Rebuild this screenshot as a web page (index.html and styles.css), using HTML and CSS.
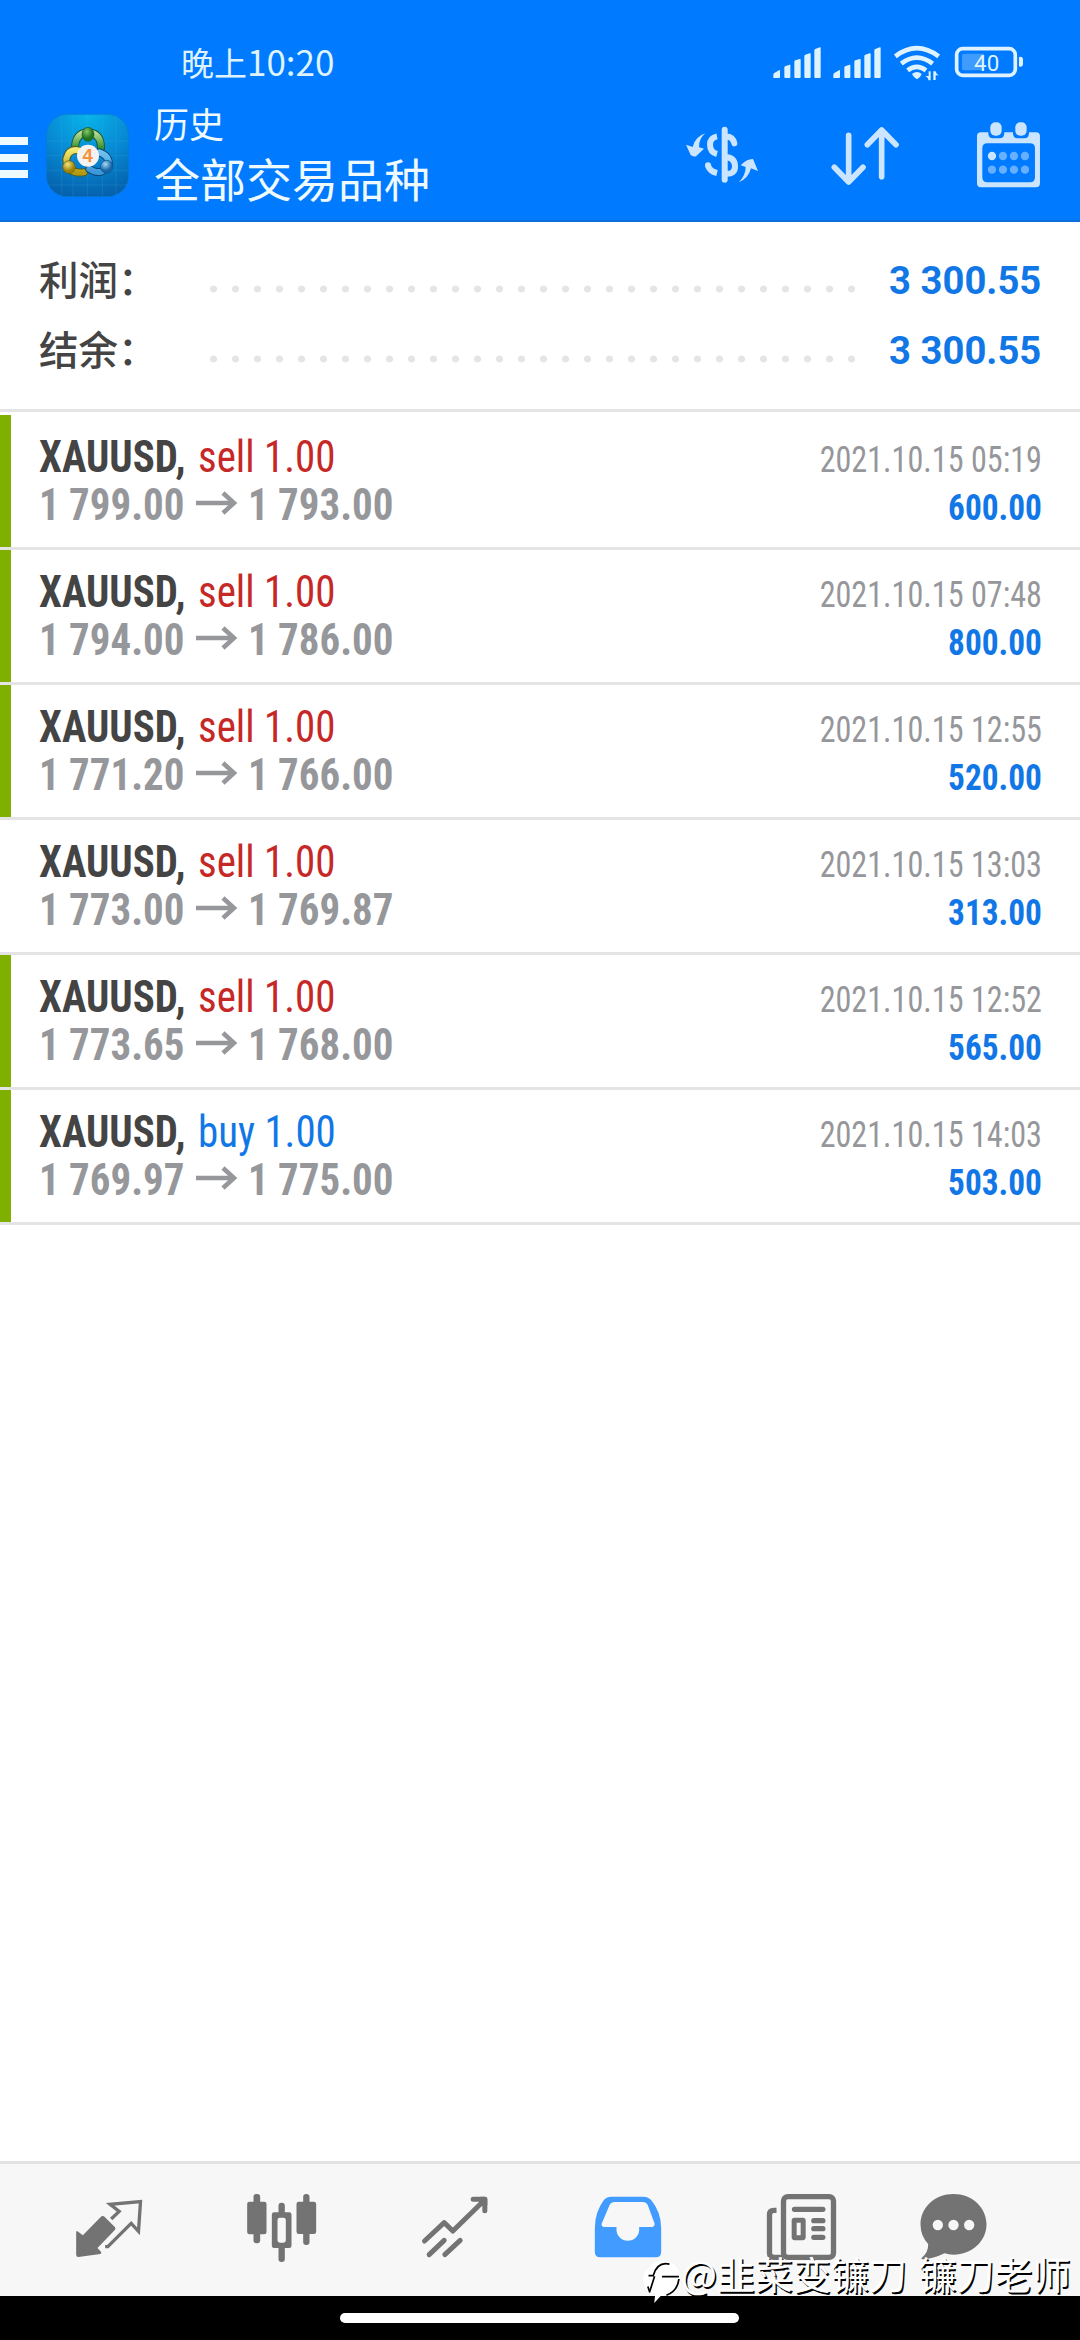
FILE: index.html
```
<!DOCTYPE html>
<html lang="zh-CN">
<head>
<meta charset="utf-8">
<title>历史</title>
<link rel="stylesheet" href="styles.css">
</head>
<body>
<div class="screen">
  <header class="header">
    <div class="status">
      <span class="clock">晚上<span class="digits">10:20</span></span>
      <svg class="status-icons" viewBox="330 60 770 140" fill="#dff3ff">
        <g id="signal">
          <path d="M340 174v-10q0-3 3-5l14-8q3-2 3 2v18q0 3-3 3zM373 142q0-2 2-3l14-5q2-1 2 2v35q0 3-3 3h-12q-3 0-3-3zM403 125q0-3 3-4l13-4q3-1 3 2v52q0 3-3 3h-13q-3 0-3-3zM433 108q0-3 3-4l13-4q3-1 3 2v69q0 3-3 3h-13q-3 0-3-3zM463 91q0-3 3-4l13-5q3-1 3 2v87q0 3-3 3h-13q-3 0-3-3z"/>
        </g>
        <use href="#signal" x="180"/>
        <g fill="none" stroke="#dff3ff" stroke-width="14">
          <path d="M706 109Q770 60 836 109M724 131Q770 95 818 131M743 151Q770 130 798 151"/>
        </g>
        <path d="M756 162q15-12 29 0q-2 8-14 16q-12-8-15-16zM806 154h6v27h-6q-1-9-10-13h10zM820 154h7q1 8 10 12h-10v14h-7z"/>
        <rect x="890" y="86" width="176" height="80" rx="18" fill="none" stroke="#dff3ff" stroke-width="11"/>
        <path d="M912 101h60v50h-60q-6 0-6-6v-38q0-6 6-6z" fill="#409bff"/>
        <path d="M1077 113q0-3 4-3q8 0 8 8v14q0 8-8 8q-4 0-4-3z"/>
        <text x="980" y="152" text-anchor="middle" class="battery">40</text>
      </svg>
    </div>
    <div class="toolbar">
      <svg class="menu" viewBox="0 0 28 42" fill="#effaff"><path d="M0 0h28v8H0zM0 17h28v8H0zM0 33h28v8H0z"/></svg>
      <svg class="logo" viewBox="20 13 249 249">
        <defs>
          <radialGradient id="sky" cx=".5" cy="0" r="1"><stop offset="0" stop-color="#08b4ea"/><stop offset=".55" stop-color="#0788d2"/><stop offset="1" stop-color="#0562ad"/></radialGradient>
          <linearGradient id="green" x2="0" y2="1"><stop stop-color="#bfe09a"/><stop offset="1" stop-color="#2e8a25"/></linearGradient>
          <linearGradient id="gold" x2="0" y2="1"><stop stop-color="#f3ea72"/><stop offset="1" stop-color="#b39a12"/></linearGradient>
          <linearGradient id="blue" x2="0" y2="1"><stop stop-color="#6fc0ef"/><stop offset="1" stop-color="#3c97d8"/></linearGradient>
          <radialGradient id="bg1" cx=".4" cy=".3"><stop stop-color="#86c968"/><stop offset="1" stop-color="#1f7420"/></radialGradient>
          <radialGradient id="by1" cx=".4" cy=".3"><stop stop-color="#f0e682"/><stop offset="1" stop-color="#a08408"/></radialGradient>
          <radialGradient id="bb1" cx=".4" cy=".3"><stop stop-color="#a5daf8"/><stop offset="1" stop-color="#1766a8"/></radialGradient>
        </defs>
        <rect x="21" y="14" width="247" height="247" rx="62" fill="url(#sky)" stroke="#0878d4" stroke-width="2"/>
        <path d="M67 16v243M101 14v247M145 14v247M189 14v247M230 16v243M21 94h247M21 138h247M21 182h247M23 226h243" stroke="#5cc4f0" stroke-opacity=".22" stroke-width="2"/>
        <g fill="none" stroke-linecap="round">
          <path d="M107 118Q106 72 146 67Q186 72 185 116" stroke="#155d3b" stroke-width="24"/>
          <path d="M107 118Q106 72 146 67Q186 72 185 116" stroke="url(#green)" stroke-width="18"/>
          <path d="M118 122Q88 116 81 148Q82 194 134 188" stroke="#4c5d26" stroke-width="24"/>
          <path d="M118 122Q88 116 81 148Q82 194 134 188" stroke="url(#gold)" stroke-width="18"/>
          <path d="M180 128Q210 138 208 164Q190 202 150 178" stroke="#084b7c" stroke-width="24"/>
          <path d="M180 128Q210 138 208 164Q190 202 150 178" stroke="url(#blue)" stroke-width="18"/>
        </g>
        <ellipse cx="146" cy="74" rx="18" ry="21" fill="url(#bg1)" stroke="#185b2a" stroke-width="2"/>
        <circle cx="89" cy="172" r="19" fill="url(#by1)" stroke="#5b5918" stroke-width="2"/>
        <circle cx="202" cy="171" r="19" fill="url(#bb1)" stroke="#0c548a" stroke-width="2"/>
        <circle cx="146" cy="138" r="33" fill="#f4f3f1"/>
        <text x="145" y="157" text-anchor="middle" class="logo-num">4</text>
      </svg>
      <div class="titles"><div class="title">历史</div><div class="subtitle">全部交易品种</div></div>
      <svg class="actions" viewBox="60 290 1100 230" fill="#cce5ff">
        <g fill="none" stroke="#cce5ff" stroke-width="18">
          <path d="M194 328V478M194 349q24-2 29 20M194 410q30 0 31 27t-31 23" stroke-linecap="round"/>
          <path d="M171 348q-21 4-21 25q0 22 21 28M171 458q-21-5-27-22"/>
        </g>
        <circle cx="144" cy="435" r="9"/>
        <path d="M136 339q-20 16-19 42l15 4l-24 23q-6 2-16-4l-14-31l20 7q7-31 38-41zM236 486q21-20 21-46l-15-5q19-20 37-19l15 36l-21-8q-8 31-37 42z"/>
        <g fill="none" stroke="#cce5ff" stroke-width="17" stroke-linecap="round" stroke-linejoin="round">
          <path d="M566 345V484M523 441l43 44 43-44M665 469V329M622 373l43-44 43 44"/>
        </g>
        <path fill-rule="evenodd" d="M963 336h22q-1 18 14 18h20q15 0 14-18h26q-1 18 14 18h20q15 0 14-18h21q12 0 12 12v141q0 12-12 12H963q-12 0-12-12V348q0-12 12-12zM982 369q-15 0-15 15v87q0 15 15 15h128q15 0 15-15v-87q0-15-15-15z"/>
        <rect x="991" y="306" width="34" height="40" rx="15"/><rect x="1066" y="306" width="34" height="40" rx="15"/>
        <circle cx="996" cy="407" r="12.5"/>
        <g fill="#66b0ff"><circle cx="1029" cy="407" r="12.5"/><circle cx="1062" cy="407" r="12.5"/><circle cx="1095" cy="407" r="12.5"/><circle cx="996" cy="448" r="12.5"/><circle cx="1029" cy="448" r="12.5"/><circle cx="1062" cy="448" r="12.5"/><circle cx="1095" cy="448" r="12.5"/></g>
      </svg>
    </div>
  </header>

  <section class="summary">
    <div class="sum-row"><span class="label">利润：</span><span class="dots"></span><span class="total">3 300.55</span></div>
    <div class="sum-row"><span class="label">结余：</span><span class="dots"></span><span class="total">3 300.55</span></div>
  </section>

  <main class="deals">
    <div class="deal closed"><div class="left"><div class="line"><b class="symbol">XAUUSD,</b><span class="sell">sell 1.00</span></div><div class="prices"><span>1 799.00</span><svg class="arrow" viewBox="0 0 42 24"><path d="M0 12H38M27 2L38 12L27 22"/></svg><span>1 793.00</span></div></div><div class="right"><div class="date">2021.10.15 05:19</div><div class="profit">600.00</div></div></div>
    <div class="deal closed"><div class="left"><div class="line"><b class="symbol">XAUUSD,</b><span class="sell">sell 1.00</span></div><div class="prices"><span>1 794.00</span><svg class="arrow" viewBox="0 0 42 24"><path d="M0 12H38M27 2L38 12L27 22"/></svg><span>1 786.00</span></div></div><div class="right"><div class="date">2021.10.15 07:48</div><div class="profit">800.00</div></div></div>
    <div class="deal closed"><div class="left"><div class="line"><b class="symbol">XAUUSD,</b><span class="sell">sell 1.00</span></div><div class="prices"><span>1 771.20</span><svg class="arrow" viewBox="0 0 42 24"><path d="M0 12H38M27 2L38 12L27 22"/></svg><span>1 766.00</span></div></div><div class="right"><div class="date">2021.10.15 12:55</div><div class="profit">520.00</div></div></div>
    <div class="deal"><div class="left"><div class="line"><b class="symbol">XAUUSD,</b><span class="sell">sell 1.00</span></div><div class="prices"><span>1 773.00</span><svg class="arrow" viewBox="0 0 42 24"><path d="M0 12H38M27 2L38 12L27 22"/></svg><span>1 769.87</span></div></div><div class="right"><div class="date">2021.10.15 13:03</div><div class="profit">313.00</div></div></div>
    <div class="deal closed"><div class="left"><div class="line"><b class="symbol">XAUUSD,</b><span class="sell">sell 1.00</span></div><div class="prices"><span>1 773.65</span><svg class="arrow" viewBox="0 0 42 24"><path d="M0 12H38M27 2L38 12L27 22"/></svg><span>1 768.00</span></div></div><div class="right"><div class="date">2021.10.15 12:52</div><div class="profit">565.00</div></div></div>
    <div class="deal closed"><div class="left"><div class="line"><b class="symbol">XAUUSD,</b><span class="buy">buy 1.00</span></div><div class="prices"><span>1 769.97</span><svg class="arrow" viewBox="0 0 42 24"><path d="M0 12H38M27 2L38 12L27 22"/></svg><span>1 775.00</span></div></div><div class="right"><div class="date">2021.10.15 14:03</div><div class="profit">503.00</div></div></div>
  </main>

  <nav class="tabs">
    <div class="tab"><svg viewBox="205.5 111 240 240" fill="#737373"><path d="M303 199q5-3 9 1l31 31q4 5 0 9l-52 54l11 12q2 5-3 6l-65 9q-7 0-7-7v-66q0-8 6-3l14 11z"/><path d="M332 207l24-23-27-21 91-8-6 89-22-24-70 70h-8" fill="none" stroke="#737373" stroke-width="10"/></svg></div>
    <div class="tab"><svg viewBox="724.5 111 240 240" fill="#737373"><rect x="740" y="155" width="58" height="98" rx="7"/><rect x="759" y="132" width="20" height="148" rx="9"/><rect x="888" y="155" width="59" height="97" rx="7"/><rect x="908" y="132" width="19" height="153" rx="9"/><rect x="834" y="158" width="19" height="40" rx="9"/><rect x="834" y="284" width="19" height="52" rx="9"/><path fill-rule="evenodd" d="M821 187h45q7 0 7 7v93q0 7-7 7h-45q-7 0-7-7v-93q0-7 7-7zM838 203q-7 0-7 7v61q0 7 7 7h11q7 0 7-7v-61q0-7-7-7z"/></svg></div>
    <div class="tab"><svg viewBox="163.5 111 240 240" fill="none" stroke="#737373" stroke-width="15" stroke-linecap="round" stroke-linejoin="round"><path d="M192 273l59-55 26 25 93-91M338 148h35v34"/><path d="M361 148h12v15z"/><path d="M206 314l45-43M253 314l46-43" /></svg></div>
    <div class="tab"><svg viewBox="682.5 111 240 240"><path fill="#429cff" fill-rule="evenodd" d="M753 140h95q15 0 24 10q30 37 30 84v72q0 16-16 16H719q-16 0-16-16v-72q0-47 27-84q8-10 23-10zM763 156q-11 0-16 10l-23 54q-3 11 8 11h36v8a34 33 0 0 0 68 0v-8h37q11 0 9-11l-20-54q-5-10-16-10z"/></svg></div>
    <div class="tab"><svg viewBox="391.5 111 240 240"><g fill="none" stroke="#737373" stroke-width="16"><rect x="459" y="140" width="150" height="182" rx="13"/><path d="M438 181h-8q-13 0-13 13v115q0 13 13 13h29"/><rect x="491" y="211" width="27" height="52" rx="1" stroke-width="15"/><path d="M492 178h85M550 212h27M550 236h27M550 262h27" stroke-linecap="round"/></g></svg></div>
    <div class="tab last"><svg viewBox="847.5 111 240 240"><path fill="#737373" d="M969 132c55 0 99 40 99 91s-44 91-99 91q-15 0-27-4q-34 17-64 18q-8-1-4-5q20-16 19-41q-23-24-23-59c0-51 44-91 99-91z"/><g fill="#f7f7f7"><circle cx="922" cy="225" r="15.5"/><circle cx="969" cy="225" r="15.5"/><circle cx="1016" cy="225" r="15.5"/></g></svg></div>
  </nav>
  <div class="gesture"><div class="pill"></div></div>
  <div class="watermark">
    <svg viewBox="0 15 115 145"><path d="M20 56Q38 30 68 31Q113 39 114 78Q112 131 58 136L39 157L42 130Q5 120 6 82Q8 66 20 56z" fill="#fff"/><path d="M22 76h14Q48 34 84 42M26 122l14-44M62 79h50" fill="none" stroke="#000" stroke-width="5"/><path d="M112 86q-4 36-37 48M20 108l6 18" fill="none" stroke="#000" stroke-width="5"/></svg>
    <span>@韭菜变镰刀 镰刀老师</span>
  </div>
</div>
</body>
</html>
```
FILE: styles.css
```
* { box-sizing: border-box; }
body { margin: 0; background: #fff; }
.screen {
  position: relative;
  display: flex;
  flex-direction: column;
  width: 1080px;
  height: 2340px;
  font-family: "Roboto Condensed", Roboto, "Noto Sans CJK SC", sans-serif;
}
svg { display: block; }

.header {
  height: 222px;
  background: #007aff;
  border-bottom: 2px solid #0f6fd8;
  color: #effaff;
  font-family: "Noto Sans CJK SC", sans-serif;
}
.status {
  display: flex;
  justify-content: space-between;
  height: 100px;
  padding: 40px 53px 0 181px;
}
.clock { margin-top: -2px; font-size: 33px; line-height: 46px; color: #dff3ff; }
.digits { font-size: 35px; }
.status-icons { width: 256.67px; height: 46.67px; }
.battery { font: 67px Roboto, sans-serif; }
.toolbar { display: flex; height: 120px; }
.menu { width: 28px; height: 42px; margin-top: 37px; }
.logo { width: 83px; height: 83px; margin: 14px 0 0 18px; }
.logo-num { font: 700 56px "Liberation Sans", sans-serif; fill: #f5913c; }
.titles { margin-left: 25px; flex: 1; }
.title { margin-top: -1px; font-size: 35px; line-height: 48px; }
.subtitle { margin-top: -2px; font-size: 46px; line-height: 64px; }
.actions { width: 366.67px; height: 76.67px; margin: 17px 33px 0 0; }

.summary {
  height: 190px;
  padding: 24px 39px 0;
  border-bottom: 3px solid #e4e4e4;
}
.sum-row { display: flex; height: 70px; line-height: 70px; }
.label { width: 170px; margin-top: -3px; font-family: "Noto Sans CJK SC", sans-serif; font-weight: 500; font-size: 39.5px; color: #444; }
.dots {
  width: 660px;
  height: 8px;
  margin: 39px 0 0 -7px;
  background: radial-gradient(circle at 11.5px 4px, #e5e5e5 3.2px, transparent 3.8px) 0 0 / 22px 8px;
}
.total { margin-left: auto; font-family: Roboto, sans-serif; font-weight: 700; font-size: 39px; color: #1277e6; transform: scaleX(.98); transform-origin: right; }

.deals { padding-top: 3px; }
.deal {
  display: flex;
  justify-content: space-between;
  height: 135px;
  padding: 18px 38px 0 28px;
  border-left: 11px solid transparent;
  background: linear-gradient(#e4e4e4, #e4e4e4) 0 100% / 100% 3px no-repeat border-box;
}
.deal.closed { border-image: linear-gradient(#7fb000 132px, #e4e4e4 132px) 0 0 0 11 / 0 0 0 11px; }
.line, .prices { display: flex; height: 48px; line-height: 48px; font-size: 44px; white-space: nowrap; }
.symbol, .sell, .buy, .prices span { transform: scaleX(.93); transform-origin: left; }
.symbol { color: #444; width: 159px; }
.sell { color: #c62828; }
.buy { color: #1277e6; }
.sell, .buy { font-weight: 430; }
.prices { font-weight: 700; color: #96979b; }
.prices span { width: 157px; }
.arrow { width: 42px; height: 24px; margin: 10px 10px 0 0; fill: none; stroke: #96979b; stroke-width: 4.5; }
.right { padding-top: 3px; text-align: right; font-size: 36px; line-height: 48px; }
.date, .profit { transform-origin: right; }
.date { color: #96979b; font-weight: 430; transform: scaleX(.893); }
.profit { color: #1277e6; font-weight: 700; transform: scaleX(.925); }

.tabs {
  display: flex;
  height: 135px;
  margin-top: auto;
  padding-left: 22px;
  background: #f7f7f7;
  border-top: 3px solid #e2e2e2;
}
.tab { width: 173px; padding-top: 23px; }
.tab svg { width: 80px; height: 80px; margin: 0 auto; }
.tab.last { width: 131px; }
.gesture { height: 44px; background: #000; padding-top: 17px; }
.pill { width: 399px; height: 10px; margin-left: 340px; border-radius: 5px; background: #fff; }

.watermark {
  position: absolute;
  left: 641px;
  top: 2246px;
  display: flex;
  font: 38px/54px "Noto Sans CJK SC", sans-serif;
  color: #fff;
  text-shadow: 1.5px 1.5px 0 #000;
  white-space: nowrap;
  word-spacing: 3px;
}
.watermark svg { width: 39px; height: 49px; margin: 9px 1px 0 0; }
```
